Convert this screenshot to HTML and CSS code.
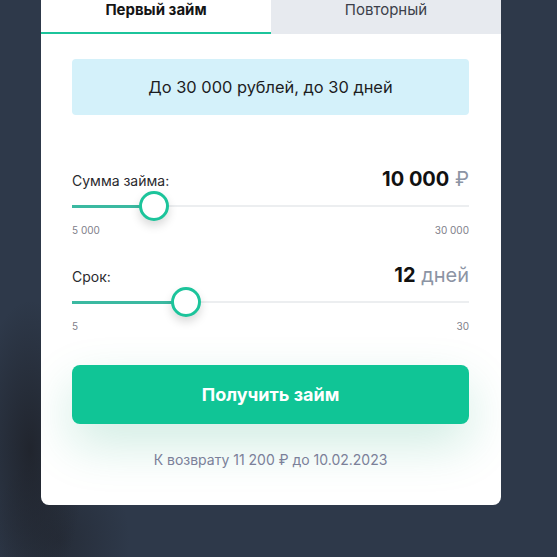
FILE: index.html
```
<!DOCTYPE html>
<html lang="ru">
<head>
<meta charset="utf-8">
<link rel="stylesheet" href="styles.css">
</head>
<body>
<div class="card">
  <div class="tabs">
    <div class="tab tab-active"><span class="tab-text">Первый займ</span></div>
    <div class="tab tab-idle"><span class="tab-text">Повторный</span></div>
  </div>
  <div class="content">
    <div class="info">До 30 000 рублей, до 30 дней</div>

    <div class="slider slider-first">
      <div class="slider-head">
        <span class="slider-label">Сумма займа:</span>
        <span class="slider-value"><b>10 000</b> <span class="unit">₽</span></span>
      </div>
      <div class="track">
        <div class="track-line"></div>
        <div class="track-fill" style="width: 20.7%"></div>
        <div class="thumb" style="left: 20.7%"></div>
      </div>
      <div class="range"><span>5 000</span><span>30 000</span></div>
    </div>

    <div class="slider slider-second">
      <div class="slider-head">
        <span class="slider-label">Срок:</span>
        <span class="slider-value"><b>12</b> <span class="unit">дней</span></span>
      </div>
      <div class="track">
        <div class="track-line"></div>
        <div class="track-fill" style="width: 28.7%"></div>
        <div class="thumb" style="left: 28.7%"></div>
      </div>
      <div class="range"><span>5</span><span>30</span></div>
    </div>

    <button class="submit">Получить займ</button>
    <div class="note">К возврату 11 200 ₽ до 10.02.2023</div>
  </div>
</div>
</body>
</html>
```
FILE: styles.css
```
html, body {
  margin: 0;
  padding: 0;
}
body {
  width: 557px;
  height: 557px;
  overflow: hidden;
  font-family: "Inter", "Noto Sans", sans-serif;
  background-color: #2e394a;
  background-image:
    radial-gradient(ellipse 55px 150px at 30px 450px, rgba(28, 30, 36, 0.75), rgba(28, 30, 36, 0) 100%),
    radial-gradient(ellipse 70px 90px at 60px 540px, rgba(28, 30, 36, 0.45), rgba(28, 30, 36, 0) 100%);
}
.card {
  width: 460px;
  margin: -18px 0 0 41px;
  background: #ffffff;
  border-radius: 8px;
  overflow: hidden;
}
.tabs {
  display: grid;
  grid-template-columns: 1fr 1fr;
}
.tab {
  height: 52px;
  box-sizing: border-box;
  display: flex;
  align-items: flex-start;
  justify-content: center;
  padding-top: 20px;
  font-size: 15px;
}
.tab-text {
  line-height: 15px;
}
.tab-active {
  font-weight: 700;
  color: #151515;
  border-bottom: 2px solid #1cc49b;
}
.tab-idle {
  background: #e7eaef;
  color: #3c3f4a;
}
.content {
  padding: 25px 32px 36px 31px;
}
.info {
  height: 56px;
  border-radius: 4px;
  background: #d4f1fa;
  display: flex;
  align-items: center;
  justify-content: center;
  font-size: 16.4px;
  color: #1d1d1f;
}
.slider-first {
  margin-top: 52px;
}
.slider-second {
  margin-top: 27px;
}
.slider-head {
  display: flex;
  justify-content: space-between;
  align-items: baseline;
  height: 24px;
}
.slider-label {
  font-size: 14px;
  color: #2a2a2e;
}
.slider-value {
  font-size: 20px;
  color: #111;
}
.slider-value b {
  font-weight: 700;
}
.unit {
  color: #8c94a4;
  font-weight: 400;
}
.track {
  position: relative;
  height: 30px;
}
.track-line {
  position: absolute;
  left: 0;
  right: 0;
  top: 14px;
  height: 2px;
  background: #eceef0;
}
.track-fill {
  position: absolute;
  left: 0;
  top: 14px;
  height: 3px;
  background: #3bb9a1;
}
.thumb {
  position: absolute;
  top: 0;
  width: 30px;
  height: 30px;
  margin-left: -15px;
  box-sizing: border-box;
  border-radius: 50%;
  border: 3px solid #1cc49b;
  background: #ffffff;
  box-shadow: 0 5px 10px rgba(0, 0, 0, 0.15);
}
.range {
  margin-top: 3px;
  display: flex;
  justify-content: space-between;
  font-size: 10px;
  line-height: 12px;
  color: #80808a;
}
.submit {
  display: flex;
  align-items: center;
  justify-content: center;
  width: 100%;
  height: 59px;
  margin-top: 33px;
  border: 0;
  border-radius: 8px;
  background: #10c596;
  color: #ffffff;
  font-family: inherit;
  font-size: 18px;
  font-weight: 700;
  box-shadow: 0 20px 50px rgba(16, 160, 110, 0.2);
}
.note {
  margin-top: 27px;
  text-align: center;
  font-size: 14px;
  line-height: 18px;
  color: #7b8099;
}
```
